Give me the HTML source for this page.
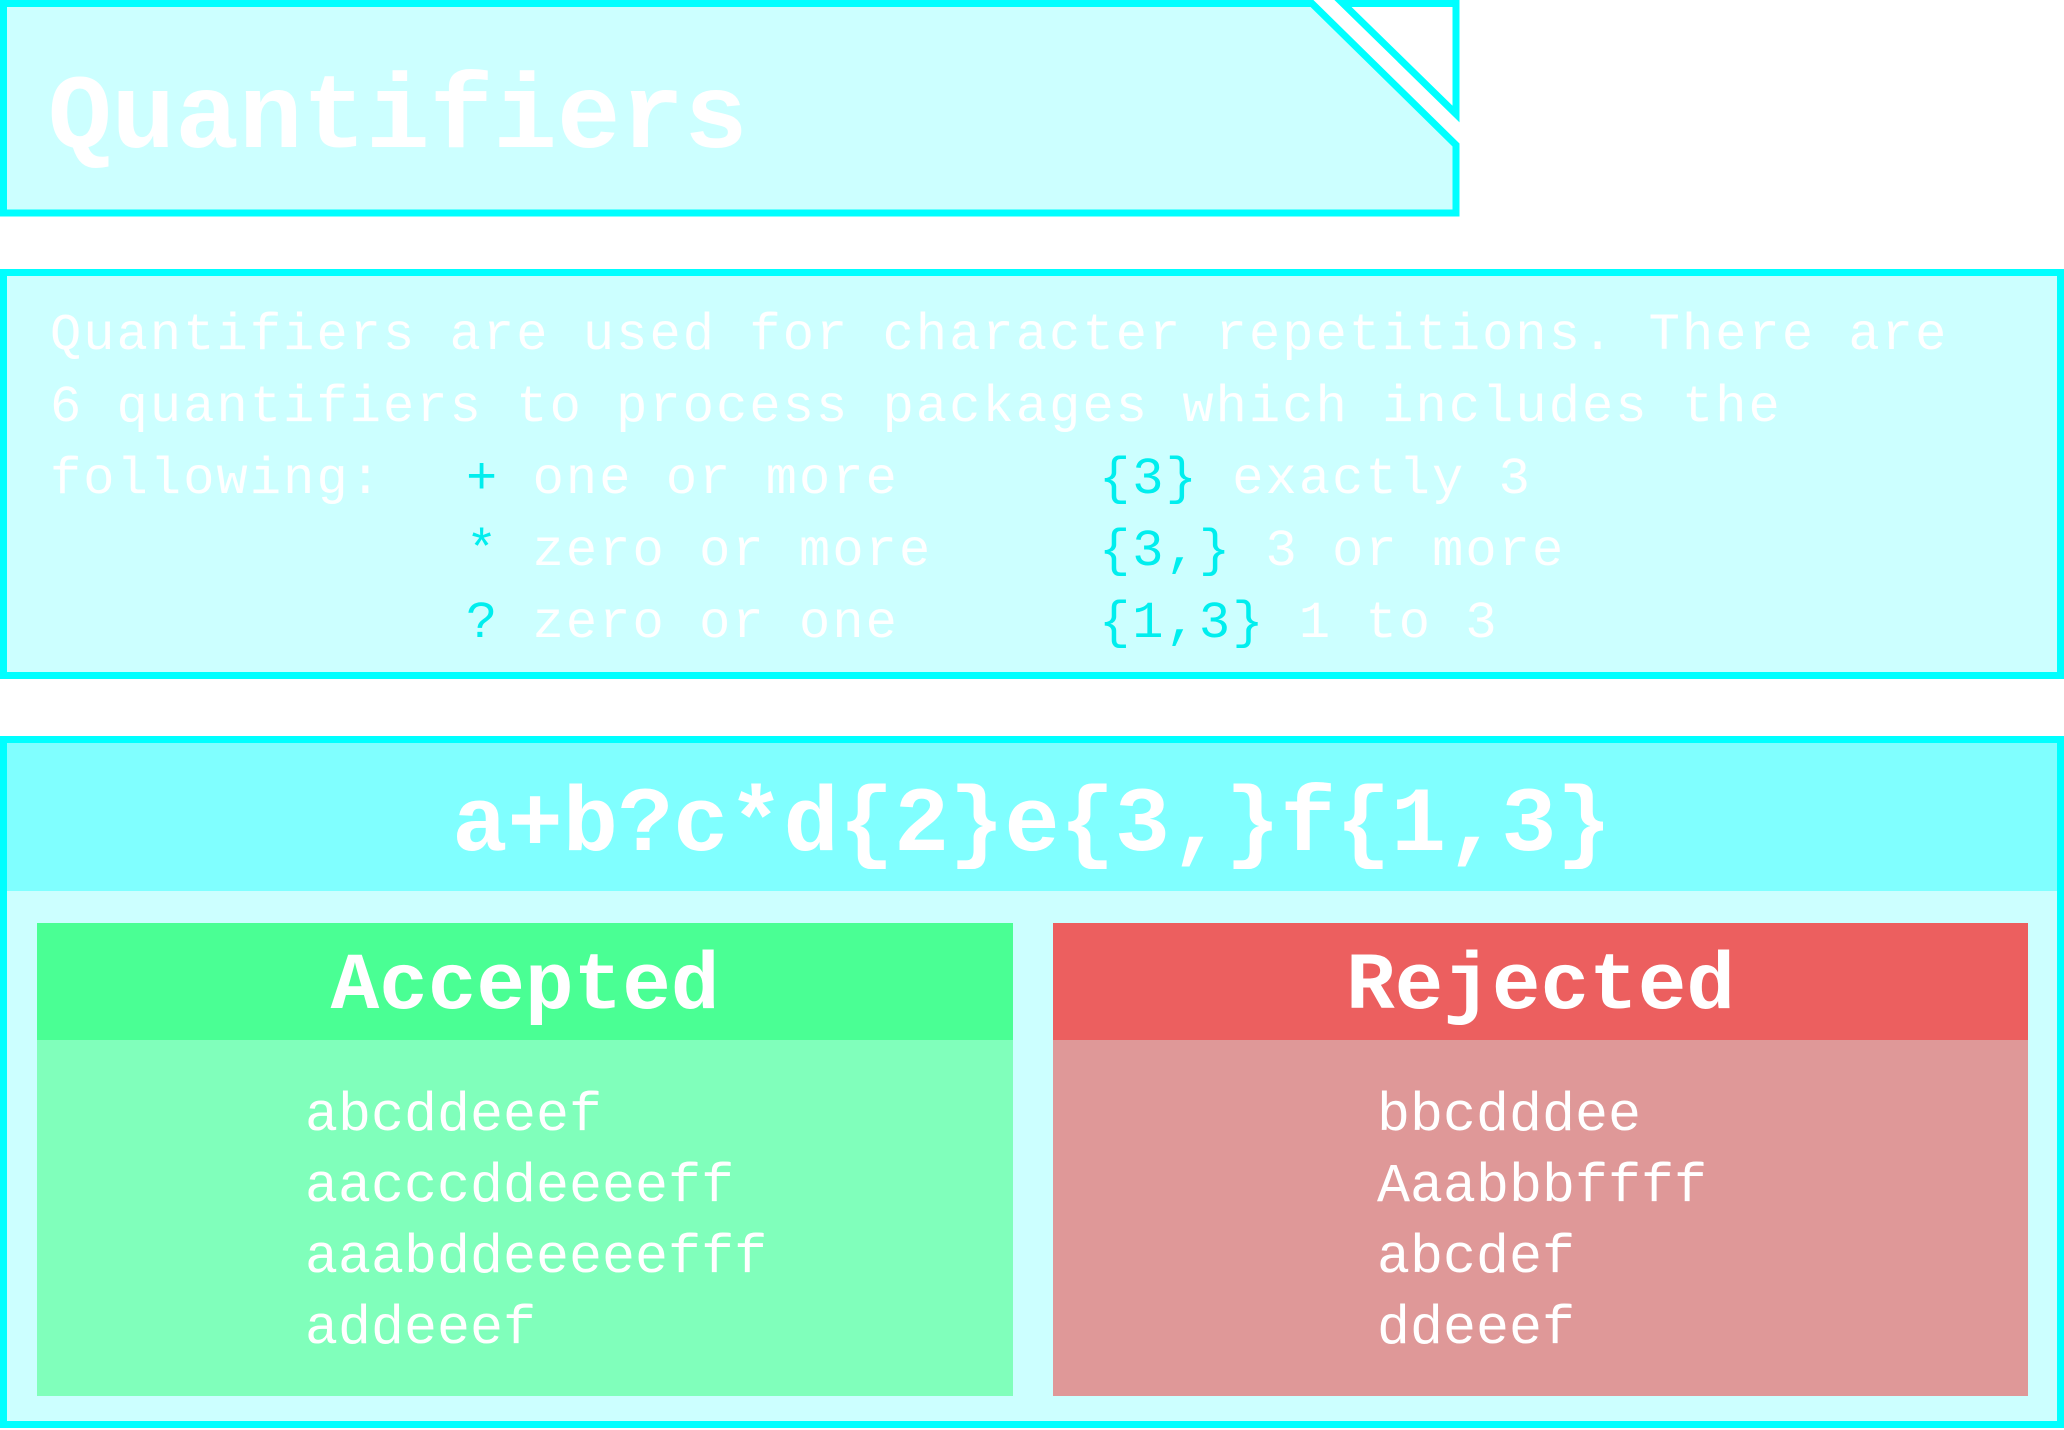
<!DOCTYPE html>
<html><head><meta charset="utf-8"><style>
body{margin:0;width:2064px;height:1430px;background:#fff;position:relative;overflow:hidden;font-family:"Liberation Mono",monospace;}
.abs{position:absolute;}
.t{color:#fff;white-space:pre;}
.c{color:#00eeee;}
.d{font-size:52px;letter-spacing:2.1px;line-height:72px;}
</style></head><body>
<svg class="abs" style="left:0;top:0" width="2064" height="1430">
<polygon points="3.5,3.5 1312,3.5 1456,145 1456,213 3.5,213" fill="#ccffff" stroke="#00ffff" stroke-width="7"/>
<polygon points="1343,3.5 1456,3.5 1456,114" fill="#fff" stroke="#00ffff" stroke-width="7"/>
<rect x="3.5" y="272.5" width="2057" height="403" fill="#ccffff" stroke="#00ffff" stroke-width="7"/>
<rect x="3.5" y="739.5" width="2057" height="685" fill="#ccffff" stroke="#00ffff" stroke-width="7"/>
<rect x="7" y="743" width="2050" height="148" fill="#80ffff"/>
<rect x="37" y="923" width="976" height="473" fill="#80ffbb"/>
<rect x="37" y="923" width="976" height="117" fill="#4aff94"/>
<rect x="1053" y="923" width="975" height="473" fill="#df9898"/>
<rect x="1053" y="923" width="975" height="117" fill="#ec5f5f"/>
</svg>
<div class="abs t" style="left:48px;top:59px;font-size:106px;font-weight:bold;line-height:120px">Quantifiers</div>
<div class="abs t d" style="left:50px;top:300px">Quantifiers are used for character repetitions. There are
6 quantifiers to process packages which includes the
following:</div>
<div class="abs t d" style="left:466px;top:444px"><span class="c">+</span> one or more
<span class="c">*</span> zero or more
<span class="c">?</span> zero or one</div>
<div class="abs t d" style="left:1099px;top:444px"><span class="c">{3}</span> exactly 3
<span class="c">{3,}</span> 3 or more
<span class="c">{1,3}</span> 1 to 3</div>
<div class="abs t" style="left:0;width:2064px;text-align:center;top:766px;font-size:92px;font-weight:bold;line-height:120px">a+b?c*d{2}e{3,}f{1,3}</div>
<div class="abs t" style="left:37px;width:976px;text-align:center;top:933px;font-size:81px;font-weight:bold;line-height:110px">Accepted</div>
<div class="abs t" style="left:1053px;width:975px;text-align:center;top:933px;font-size:81px;font-weight:bold;line-height:110px">Rejected</div>
<div class="abs t" style="left:305px;top:1080px;font-size:55px;line-height:71px">abcddeeef
aacccddeeeeff
aaabddeeeeefff
addeeef</div>
<div class="abs t" style="left:1377px;top:1080px;font-size:55px;line-height:71px">bbcdddee
Aaabbbffff
abcdef
ddeeef</div>
</body></html>
